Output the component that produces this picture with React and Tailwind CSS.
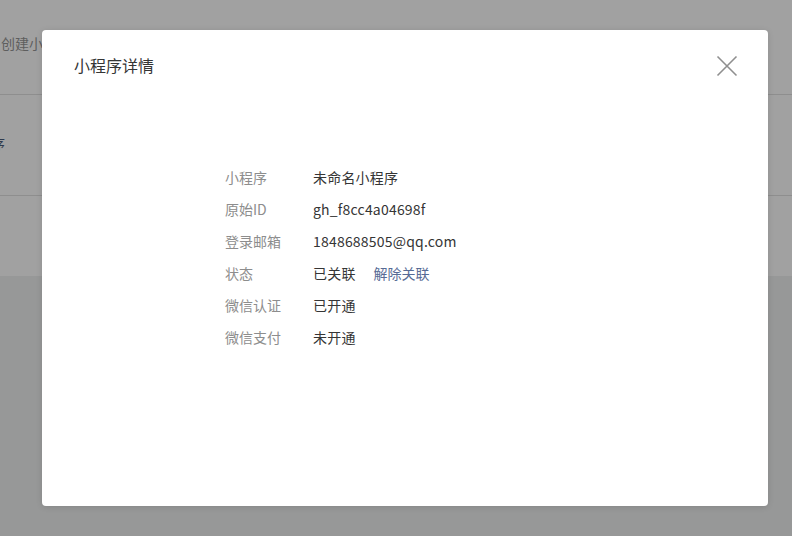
const font = { fontFamily: '"Noto Sans CJK SC", "Noto Sans", sans-serif' };

const rows = [
  { label: '小程序', value: '未命名小程序' },
  { label: '原始ID', value: 'gh_f8cc4a04698f' },
  { label: '登录邮箱', value: '1848688505@qq.com' },
  { label: '状态', value: '已关联', action: '解除关联' },
  { label: '微信认证', value: '已开通' },
  { label: '微信支付', value: '未开通' },
];

const CloseIcon = () => (
  <svg width="22" height="22" viewBox="0 0 22 22" fill="none">
    <path d="M1.5 1.5 L20.5 20.5 M20.5 1.5 L1.5 20.5" stroke="#8f8f8f" strokeWidth="1.6" />
  </svg>
);

export default function App() {
  return (
    <div className="relative w-[792px] h-[536px] overflow-hidden" style={font}>
      {/* page underneath, already dimmed */}
      <div className="flex flex-col h-full">
        <div className="h-[276px] bg-[#a1a1a1] flex flex-col">
          <div className="h-[95px] border-b border-[#8e8e8e] flex items-center">
            <span className="ml-[1px] -mt-[7px] text-[14px] text-[#5e5e5e]">创建小程序</span>
          </div>
          <div className="h-[101px] border-b border-[#8e8e8e] flex items-center">
            <span className="-ml-[9px] -mt-[4px] text-[14px] text-[#2f3a4c]">序</span>
          </div>
        </div>
        <div className="flex-1 bg-[#979898]" />
      </div>

      {/* modal */}
      <div className="absolute left-[42px] top-[30px] w-[726px] h-[476px] bg-white rounded-[4px] shadow-[0_1px_6px_rgba(0,0,0,0.12)]">
        <div className="flex items-center justify-between pl-[32px] pr-[30px] pt-[23px]">
          <h3 className="text-[16px] leading-[24px] text-[#353535] font-normal">小程序详情</h3>
          <button className="w-[22px] h-[22px] mt-[1px]">
            <CloseIcon />
          </button>
        </div>
        <div className="w-[360px] mx-auto mt-[84px] flex flex-col">
          {rows.map((r) => (
            <div key={r.label} className="flex items-center h-[32px] text-[14px]">
              <span className="w-[88px] text-[#8d8d8d]">{r.label}</span>
              <span className="text-[#353535] tracking-[0.2px]">{r.value}</span>
              {r.action && <a className="ml-[18px] text-[#576b95] cursor-pointer">{r.action}</a>}
            </div>
          ))}
        </div>
      </div>
    </div>
  );
}
